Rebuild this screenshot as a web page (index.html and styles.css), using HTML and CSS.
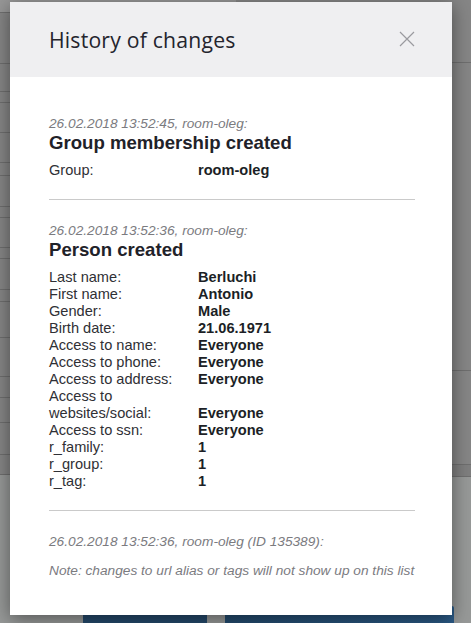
FILE: index.html
```html
<!DOCTYPE html>
<html>
<head>
<meta charset="utf-8">
<link rel="stylesheet" href="styles.css">
</head>
<body>
<div class="page">
  <div class="col-left">
    <div class="r" style="height:13px"></div>
    <div class="r" style="height:51px"></div>
    <div class="r" style="height:28px"></div>
    <div class="r" style="height:11px"></div>
    <div class="r" style="height:30px"></div>
    <div class="r" style="height:30px"></div>
    <div class="r" style="height:13px"></div>
    <div class="r" style="height:31px"></div>
    <div class="r" style="height:11px"></div>
    <div class="r" style="height:30px"></div>
    <div class="r" style="height:11px"></div>
    <div class="r" style="height:31px"></div>
    <div class="r" style="height:12px"></div>
    <div class="r" style="height:36px"></div>
    <div class="r" style="height:39px"></div>
    <div class="r" style="height:21px"></div>
    <div class="r" style="height:25px"></div>
    <div class="r" style="height:32px"></div>
    <div class="r" style="height:20px"></div>
    <div class="foot"></div>
  </div>
  <div class="col-right">
    <div class="r" style="height:63px"></div>
    <div class="r" style="height:308px"></div>
    <div class="r" style="height:94px"></div>
    <div class="r dark" style="height:12px"></div>
    <div class="foot">
      <div class="btns"><span class="btn b1"></span><span class="btn b2"></span></div>
    </div>
  </div>
</div>

<div class="modal">
  <div class="modal-header">
    <h2 class="modal-title">History of changes</h2>
    <svg class="close" width="16" height="16" viewBox="0 0 16 16"><path d="M1 1 L15 15 M15 1 L1 15" stroke="#9a9a9f" stroke-width="1.2" fill="none"/></svg>
  </div>
  <div class="modal-body">
    <div class="entry">
      <div class="meta">26.02.2018 13:52:45, room-oleg:</div>
      <div class="heading">Group membership created</div>
      <div class="fields">
        <div class="label">Group:</div><div class="value">room-oleg</div>
      </div>
    </div>
    <hr class="divider">
    <div class="entry">
      <div class="meta">26.02.2018 13:52:36, room-oleg:</div>
      <div class="heading">Person created</div>
      <div class="fields">
        <div class="label">Last name:</div><div class="value">Berluchi</div>
        <div class="label">First name:</div><div class="value">Antonio</div>
        <div class="label">Gender:</div><div class="value">Male</div>
        <div class="label">Birth date:</div><div class="value">21.06.1971</div>
        <div class="label">Access to name:</div><div class="value">Everyone</div>
        <div class="label">Access to phone:</div><div class="value">Everyone</div>
        <div class="label">Access to address:</div><div class="value">Everyone</div>
        <div class="label">Access to websites/social:</div><div class="value">Everyone</div>
        <div class="label">Access to ssn:</div><div class="value">Everyone</div>
        <div class="label">r_family:</div><div class="value">1</div>
        <div class="label">r_group:</div><div class="value">1</div>
        <div class="label">r_tag:</div><div class="value">1</div>
      </div>
    </div>
    <hr class="divider">
    <div class="meta foot-meta">26.02.2018 13:52:36, room-oleg (ID 135389):</div>
    <div class="meta note">Note: changes to url alias or tags will not show up on this list</div>
  </div>
</div>
</body>
</html>
```

FILE: styles.css
```css
html, body {
  margin: 0;
  padding: 0;
}
body {
  width: 471px;
  height: 623px;
  overflow: hidden;
  position: relative;
  background: #868686;
  font-family: "Liberation Sans", Arial, sans-serif;
}
.page {
  display: grid;
  grid-template-columns: 1fr 1fr;
  height: 623px;
}
.col-left, .col-right {
  display: flex;
  flex-direction: column;
}
.r {
  border-bottom: 1px solid #6f6f6f;
  box-sizing: border-box;
  flex: none;
}
.col-left .r:first-child {
  background: #979797;
}
.r.dark {
  background: #7f7f7f;
}
.foot {
  flex: 1;
  background: #979998;
  position: relative;
}
.btns {
  position: absolute;
  left: 0;
  right: 0;
  bottom: 0;
}
.btn {
  position: absolute;
  bottom: 0;
  height: 17px;
  background: #24496b;
  border-radius: 2px 2px 0 0;
}
.b1 { left: -153px; width: 124px; }
.b2 { left: -11px; width: 229px; background: linear-gradient(90deg, #234a6d, #2b5a86); }

.modal {
  position: absolute;
  left: 10px;
  top: 2px;
  width: 442px;
  height: 613px;
  background: #fff;
  box-shadow: 0 4px 18px rgba(0,0,0,0.45);
  display: flex;
  flex-direction: column;
}
.modal-header {
  height: 75px;
  flex: none;
  background: #efeff1;
  display: flex;
  align-items: center;
  justify-content: space-between;
  padding: 0 37px 0 39px;
}
.modal-title {
  margin: 0;
  font-family: "Open Sans", sans-serif;
  font-weight: 500;
  font-size: 21.2px;
  color: #24242d;
  letter-spacing: 0.2px;
}
.close {
  display: block;
  margin-top: -2px;
}
.modal-body {
  padding: 38px 37px 0 39px;
}
.meta {
  font-style: italic;
  font-size: 13.7px;
  line-height: 17px;
  color: #7b7b7f;
  white-space: nowrap;
}
.heading {
  font-weight: bold;
  font-size: 18.6px;
  line-height: 21px;
  color: #1f2229;
}
.fields {
  display: grid;
  grid-template-columns: 149px 1fr;
  margin-top: 9px;
  font-size: 14.6px;
  line-height: 17px;
}
.label {
  color: #2f3035;
  padding-right: 6px;
}
.value {
  font-weight: bold;
  color: #1c1f26;
  align-self: end;
}
.divider {
  border: 0;
  border-top: 1px solid #cacaca;
  margin: 20px 0 22px;
}
.foot-meta {
  margin-top: 2px;
}
.note {
  margin-top: 12px;
}
```
